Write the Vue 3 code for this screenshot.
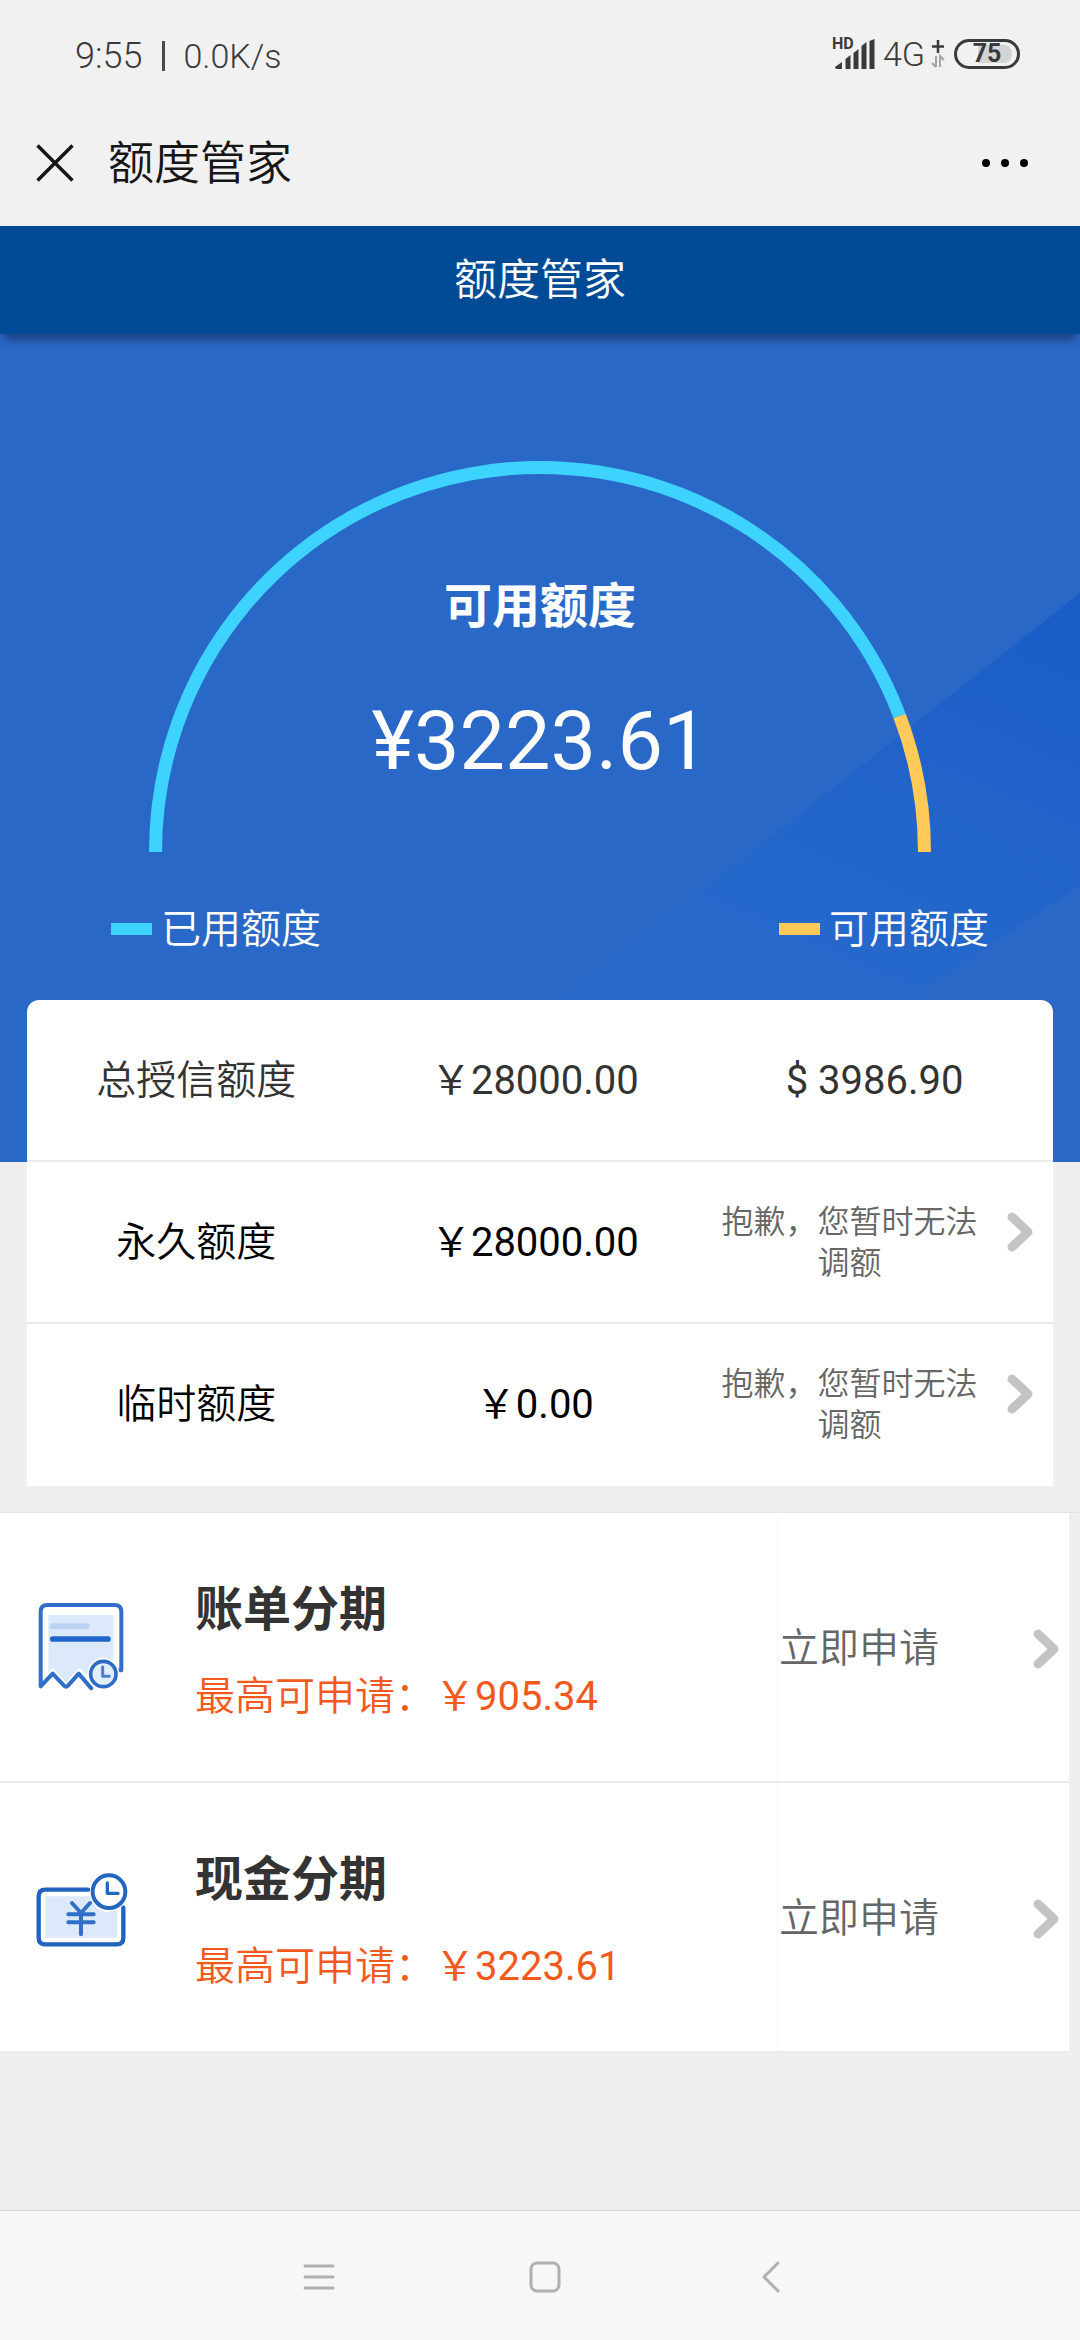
<script setup>
const radius = 384.5
const usedShare = (28000 - 3223.61) / 28000
const splitAngle = Math.PI * (1 - usedShare)
const splitX = 391 + radius * Math.cos(splitAngle)
const splitY = 391 - radius * Math.sin(splitAngle)
const usedArc = `M6.5 391 A${radius} ${radius} 0 0 1 ${splitX} ${splitY}`
const freeArc = `M${splitX} ${splitY} A${radius} ${radius} 0 0 1 775.5 391`

const limits = [
  { name: '永久额度', amount: '￥28000.00', note: '抱歉，您暂时无法调额' },
  { name: '临时额度', amount: '￥0.00', note: '抱歉，您暂时无法调额' },
]

const plans = [
  { id: 'bill', name: '账单分期', max: '￥905.34' },
  { id: 'cash', name: '现金分期', max: '￥3223.61' },
]
</script>

<template>
  <div class="page">
    <header class="top">
      <div class="status">
        <div class="status-left">
          <span>9:55</span>
          <i class="sep"></i>
          <span class="speed">0.0K/s</span>
        </div>
        <div class="status-right">
          <div class="signal">
            <span class="hd">HD</span>
            <svg width="41" height="32" viewBox="0 0 41 32">
              <path
                fill="#3a3a3a"
                d="M1 29l7-5v7H3q-2 0-2-2zM11.500 21l5-4v14h-5zM19.500 15l5-4v20h-5zM27.500 8l5-4v27h-5zM35.500 3l5-2v30h-5z"
              />
            </svg>
          </div>
          <span class="net">4G</span>
          <svg class="plus" width="14" height="30" viewBox="0 0 14 30">
            <path d="M7 1v13M1 7.500h12" stroke="#3a3a3a" stroke-width="2.500" />
            <path d="M5 17v11M5 28l-4-4M9 28V17l4 4" stroke="#a5a5a5" stroke-width="2" fill="none" />
          </svg>
          <div class="battery"><span>75</span></div>
        </div>
      </div>
      <div class="titlebar">
        <button class="icon-btn" type="button" aria-label="关闭">
          <svg width="38" height="38" viewBox="0 0 38 38">
            <path d="M1.500 1.500l35 35M36.500 1.500l-35 35" stroke="#161616" stroke-width="3.500" />
          </svg>
        </button>
        <span class="title">额度管家</span>
        <button class="icon-btn more" type="button" aria-label="更多">
          <svg width="46" height="10" viewBox="0 0 46 10">
            <circle cx="4" cy="5" r="4" />
            <circle cx="23" cy="5" r="4" />
            <circle cx="42" cy="5" r="4" />
          </svg>
        </button>
      </div>
    </header>

    <h1 class="banner">额度管家</h1>

    <section class="hero">
      <svg class="facets" viewBox="0 0 1080 828" preserveAspectRatio="none">
        <defs>
          <linearGradient id="facet" gradientUnits="userSpaceOnUse" x1="1080" y1="260" x2="900" y2="670">
            <stop offset="0" stop-color="#1a5cc7" />
            <stop offset="1" stop-color="#2669cb" />
          </linearGradient>
        </defs>
        <path d="M1080 259L560 670H900L1080 552z" fill="url(#facet)" />
      </svg>
      <div class="gauge">
        <svg viewBox="0 0 782 391">
          <path :d="usedArc" class="arc used" />
          <path :d="freeArc" class="arc free" />
        </svg>
        <div class="reading">
          <strong>可用额度</strong>
          <span class="amount">¥3223.61</span>
        </div>
      </div>
      <div class="legend">
        <span class="key"><i class="swatch used"></i>已用额度</span>
        <span class="key"><i class="swatch free"></i>可用额度</span>
      </div>
    </section>

    <table class="card">
      <colgroup>
        <col class="col" />
        <col class="col" />
        <col />
      </colgroup>
      <tbody>
        <tr class="total">
          <th scope="row">总授信额度</th>
          <td>￥28000.00</td>
          <td class="usd">$ 3986.90</td>
        </tr>
        <tr v-for="l in limits" :key="l.name">
          <th scope="row">{{ l.name }}</th>
          <td>{{ l.amount }}</td>
          <td>
            <a href="#" class="adjust">
              <span class="note">{{ l.note }}</span>
              <svg width="40" height="62" viewBox="0 0 40 62">
                <path class="chevron" d="M17 15l16 15-16 15" />
              </svg>
            </a>
          </td>
        </tr>
      </tbody>
    </table>

    <ul class="plans">
      <li v-for="p in plans" :key="p.id" class="plan">
        <svg v-if="p.id === 'bill'" class="plan-icon" viewBox="0 0 360 360">
          <path d="M85 78H280V215L250 205Q205 215 203 262L178 236 138 280 98 236 85 250z" fill="#dbe9fb" />
          <path d="M98 112H200" class="ln" stroke="#bdd3f4" stroke-width="18" />
          <path d="M98 150H264" class="ln" stroke="#1f66c8" stroke-width="17" />
          <path
            d="M214 298L176 254 144 290Q138 296 132 290L98 254 62 292V68Q62 48 82 48H284Q304 48 304 68V244H296"
            class="ln"
            stroke="#2f6fc9"
            stroke-width="12"
          />
          <circle cx="250" cy="255" r="48" fill="#fff" />
          <circle cx="250" cy="255" r="38" fill="#e3eefc" stroke="#2c6cc6" stroke-width="11" />
          <path d="M248 234V262H268" class="ln" stroke="#4a80cd" stroke-width="9" />
        </svg>
        <svg v-else class="plan-icon" viewBox="0 0 360 360">
          <path d="M76 112H212Q222 156 262 160L292 152V236H76z" fill="#dbe9fb" />
          <path
            d="M204 92H76Q56 92 56 112V236Q56 256 76 256H290Q310 256 310 236V146"
            class="ln"
            stroke="#1f63bf"
            stroke-width="13"
          />
          <path d="M156 132L183 162 210 132M183 162V226M145 166H221M145 190H221" class="ln" stroke="#3270c8" stroke-width="12" />
          <circle cx="267" cy="98" r="49" fill="#fff" stroke="#2467c2" stroke-width="12" />
          <path d="M262 72V103H294" class="ln" stroke="#2467c2" stroke-width="10" />
        </svg>
        <div class="plan-text">
          <h2>{{ p.name }}</h2>
          <p><span class="hint">最高可申请：</span>{{ p.max }}</p>
        </div>
        <a href="#" class="apply">
          立即申请
          <svg width="40" height="62" viewBox="0 0 40 62">
            <path class="chevron" d="M16 16l16 15-16 15" />
          </svg>
        </a>
      </li>
    </ul>

    <nav class="sysnav">
      <button type="button" aria-label="菜单">
        <svg width="32" height="32" viewBox="0 0 32 32">
          <path d="M2 5H30M2 16H30M2 27H30" />
        </svg>
      </button>
      <button type="button" aria-label="主页">
        <svg width="32" height="32" viewBox="0 0 32 32">
          <rect x="2" y="2" width="28" height="28" rx="6" />
        </svg>
      </button>
      <button type="button" aria-label="返回">
        <svg width="32" height="32" viewBox="0 0 32 32">
          <path d="M23 2L9 16 23 30" />
        </svg>
      </button>
    </nav>
  </div>
</template>

<style>
body {
  background: #f0f0f0;
}
</style>

<style scoped>
.page {
  min-height: 100vh;
  display: flex;
  flex-direction: column;
  background: #efefef;
  font-family: Roboto, 'Noto Sans CJK SC', sans-serif;
  font-size: 40px;
  line-height: 60px;
  color: #333;
}
svg {
  display: block;
  flex: none;
}
a {
  color: inherit;
  text-decoration: none;
}
button {
  padding: 0;
  border: 0;
  background: none;
}

.top {
  background: #f1f1f1;
}
.status {
  display: flex;
  justify-content: space-between;
  align-items: center;
  height: 100px;
  padding: 8px 60px 0 75px;
  box-sizing: border-box;
  color: #3a3a3a;
  font-size: 36px;
  line-height: 40px;
  font-weight: 350;
}
.status-left,
.status-right {
  display: flex;
  align-items: center;
}
.status-left {
  padding-top: 4px;
}
.sep {
  width: 3px;
  height: 30px;
  margin: 0 18px 0 20px;
  background: #4a4a4a;
}
.speed,
.net {
  font-size: 34px;
}
.status-right {
  height: 32px;
}
.signal {
  position: relative;
}
.hd {
  position: absolute;
  left: -2px;
  top: -4px;
  font-size: 16px;
  line-height: 20px;
  font-weight: 700;
}
.net {
  margin-left: 8px;
}
.plus {
  margin-left: 6px;
}
.battery {
  width: 66px;
  height: 30px;
  margin-left: 9px;
  box-sizing: border-box;
  border: 3px solid #3a3a3a;
  border-radius: 15px;
  background: linear-gradient(90deg, transparent 16px, #d4d4d4 16px) content-box no-repeat;
  padding: 3px 5px;
  display: flex;
  align-items: center;
  justify-content: center;
  font-size: 25px;
  font-weight: 700;
}
.titlebar {
  display: flex;
  align-items: center;
  height: 126px;
  padding: 0 52px 0 36px;
}
.title {
  margin-left: 34px;
  font-size: 46px;
  font-weight: 350;
  color: #161616;
}
.more {
  margin-left: auto;
}

.banner {
  position: relative;
  z-index: 1;
  margin: 0;
  height: 108px;
  background: #004a96;
  box-shadow: 0 9px 10px -4px rgba(20, 40, 80, 0.7);
  color: #fff;
  font-size: 43px;
  line-height: 108px;
  font-weight: 350;
  text-align: center;
}

.hero {
  position: relative;
  padding: 127px 0 202px;
  background: #2a68c8;
  color: #fff;
}
.facets {
  position: absolute;
  inset: 0;
  width: 100%;
  height: 100%;
}
.gauge {
  position: relative;
  width: 782px;
  max-width: 90%;
  margin: 0 auto;
}
.gauge svg {
  width: 100%;
}
.arc {
  fill: none;
  stroke-width: 13;
}
.arc.used {
  stroke: #3ed2ff;
}
.arc.free {
  stroke: #ffca58;
}
.reading {
  position: absolute;
  inset: 0;
  display: flex;
  flex-direction: column;
  align-items: center;
  padding-top: 110px;
  gap: 51px;
}
.reading strong {
  font-size: 48px;
  line-height: 72px;
}
.amount {
  font-size: 81px;
  line-height: 96px;
}
.legend {
  position: relative;
  display: flex;
  justify-content: space-between;
  margin-top: 48px;
  padding: 0 91px 0 111px;
  font-weight: 350;
}
.key {
  display: flex;
  align-items: center;
}
.swatch {
  width: 41px;
  height: 12px;
  margin: 0 9px 2px 0;
}
.swatch.used {
  background: #3ed2ff;
}
.swatch.free {
  background: #ffca58;
}

.card {
  position: relative;
  z-index: 1;
  width: calc(100% - 54px);
  margin: -162px 27px 0;
  table-layout: fixed;
  border-collapse: separate;
  border-spacing: 0;
  border-radius: 12px 12px 0 0;
  background: #fff;
  color: #000;
}
.col {
  width: 33%;
}
.card th,
.card td {
  height: 158px;
  padding: 2px 0 0;
  border-bottom: 2px solid #ebebeb;
  font-weight: 400;
  text-align: center;
  vertical-align: middle;
}
.card th {
  font-weight: 350;
}
.card tr:last-child > * {
  border-bottom-color: #fff;
}
.total {
  color: #333;
}
.card .usd {
  padding-right: 8px;
}
.adjust {
  display: flex;
  align-items: flex-start;
  padding-right: 18px;
  color: #666;
  font-size: 32px;
  line-height: 41px;
  font-weight: 350;
}
.note {
  flex: 1;
  padding: 0 8px;
}
.chevron {
  fill: none;
  stroke: #c3c3c3;
  stroke-width: 9;
  stroke-linecap: round;
  stroke-linejoin: round;
}

.plans {
  margin: 26px 0 0;
  padding: 0 11px 0 0;
  list-style: none;
  border-top: 1px solid #e4e4e4;
}
.plan {
  display: flex;
  align-items: center;
  height: 264px;
  padding: 4px 0 0 20px;
  border-bottom: 2px solid #ebebeb;
  background: #fff;
}
.plan-icon {
  width: 120px;
  height: 120px;
}
.ln {
  fill: none;
  stroke-linecap: round;
  stroke-linejoin: round;
}
.plan-text {
  flex: 1;
  padding: 2px 0 0 55px;
}
.plan-text h2 {
  margin: 0;
  font-size: 48px;
  line-height: 72px;
}
.plan-text p {
  margin: 21px 0 0;
  color: #f3591c;
}
.hint {
  font-weight: 350;
}
.apply {
  display: flex;
  align-items: center;
  justify-content: space-between;
  align-self: stretch;
  width: 283px;
  padding-right: 7px;
  border-left: 2px solid #fafafa;
  color: #666;
  font-weight: 350;
}

.sysnav {
  display: flex;
  justify-content: center;
  height: 130px;
  margin-top: auto;
  padding: 2px 0 0 10px;
  box-sizing: border-box;
  border-top: 1px solid #d8d8d8;
  background: #f7f7f7;
}
.sysnav button {
  width: 226px;
  display: flex;
  align-items: center;
  justify-content: center;
}
.sysnav svg {
  fill: none;
  stroke: #b0b0b0;
  stroke-width: 3;
  stroke-linecap: round;
  stroke-linejoin: round;
}
</style>
